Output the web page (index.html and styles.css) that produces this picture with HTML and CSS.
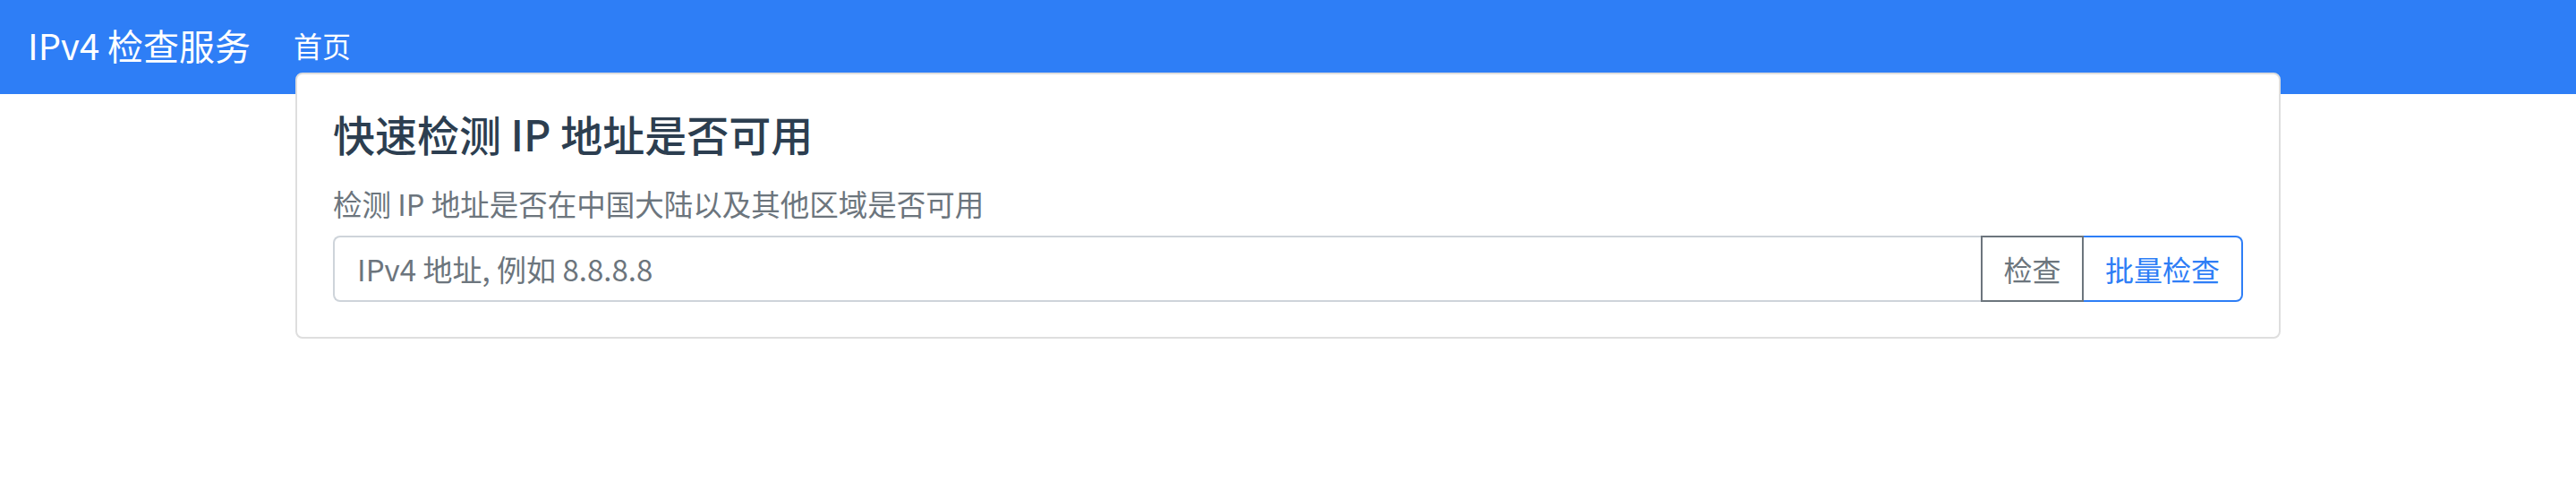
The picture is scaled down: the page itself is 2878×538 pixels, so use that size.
FILE: index.html
```html
<!DOCTYPE html>
<html lang="zh-CN">
<head>
<meta charset="utf-8">
<title>IPv4 检查服务</title>
<link rel="stylesheet" href="styles.css">
</head>
<body>
<nav class="navbar">
  <a class="brand" href="#">IPv4 检查服务</a>
  <a class="nav-link" href="#">首页</a>
</nav>
<main class="container">
  <section class="card">
    <h4 class="title">快速检测 IP 地址是否可用</h4>
    <p class="subtitle">检测 IP 地址是否在中国大陆以及其他区域是否可用</p>
    <div class="input-group">
      <input class="form-control" type="text" placeholder="IPv4 地址, 例如 8.8.8.8">
      <button class="btn btn-check">检查</button>
      <button class="btn btn-batch">批量检查</button>
    </div>
  </section>
</main>
</body>
</html>
```
FILE: styles.css
```css
* { box-sizing: border-box; }
html, body {
  margin: 0;
  padding: 0;
  background: #ffffff;
  font-family: "Noto Sans CJK SC", "Noto Sans", sans-serif;
}
.navbar {
  height: 105px;
  background: #2e7ef6;
  display: flex;
  align-items: center;
  padding: 0 0 6px 31px;
}
.brand {
  color: #ffffff;
  text-decoration: none;
  font-size: 40px;
  line-height: 1.2;
  margin-right: 48px;
}
.nav-link {
  color: #ffffff;
  text-decoration: none;
  font-size: 32px;
  line-height: 1.2;
  padding-top: 2px;
}
.container {
  width: 2218px;
  margin: -24px auto 0;
}
.card {
  background: #ffffff;
  border: 2px solid #dedede;
  border-radius: 8px;
  padding: 37px 40px 39px;
}
.title {
  margin: 0;
  font-size: 47px;
  font-weight: 500;
  line-height: 58px;
  color: #2c3e50;
}
.subtitle {
  margin: 24px 0 11px;
  font-size: 32.5px;
  line-height: 50px;
  color: #6c757d;
}
.input-group {
  display: flex;
  height: 74px;
}
.form-control {
  flex: 1;
  min-width: 0;
  height: 74px;
  border: 2px solid #ced4da;
  border-right: none;
  border-radius: 8px 0 0 8px;
  padding: 0 25px;
  font-family: "Noto Sans CJK SC", "Noto Sans", sans-serif;
  font-size: 33px;
  color: #495057;
  outline: none;
}
.form-control::placeholder { color: #6c757d; }
.btn {
  height: 74px;
  background: #ffffff;
  font-family: "Noto Sans CJK SC", "Noto Sans", sans-serif;
  font-size: 32px;
  padding: 0;
  border: 2px solid;
  white-space: nowrap;
  text-align: center;
  cursor: pointer;
}
.btn-check {
  width: 115px;
  color: #6c757d;
  border-color: #6c757d;
  border-radius: 0;
}
.btn-batch {
  width: 178px;
  color: #2e7ef6;
  border-color: #2e7ef6;
  border-left: none;
  border-radius: 0 8px 8px 0;
}
```
